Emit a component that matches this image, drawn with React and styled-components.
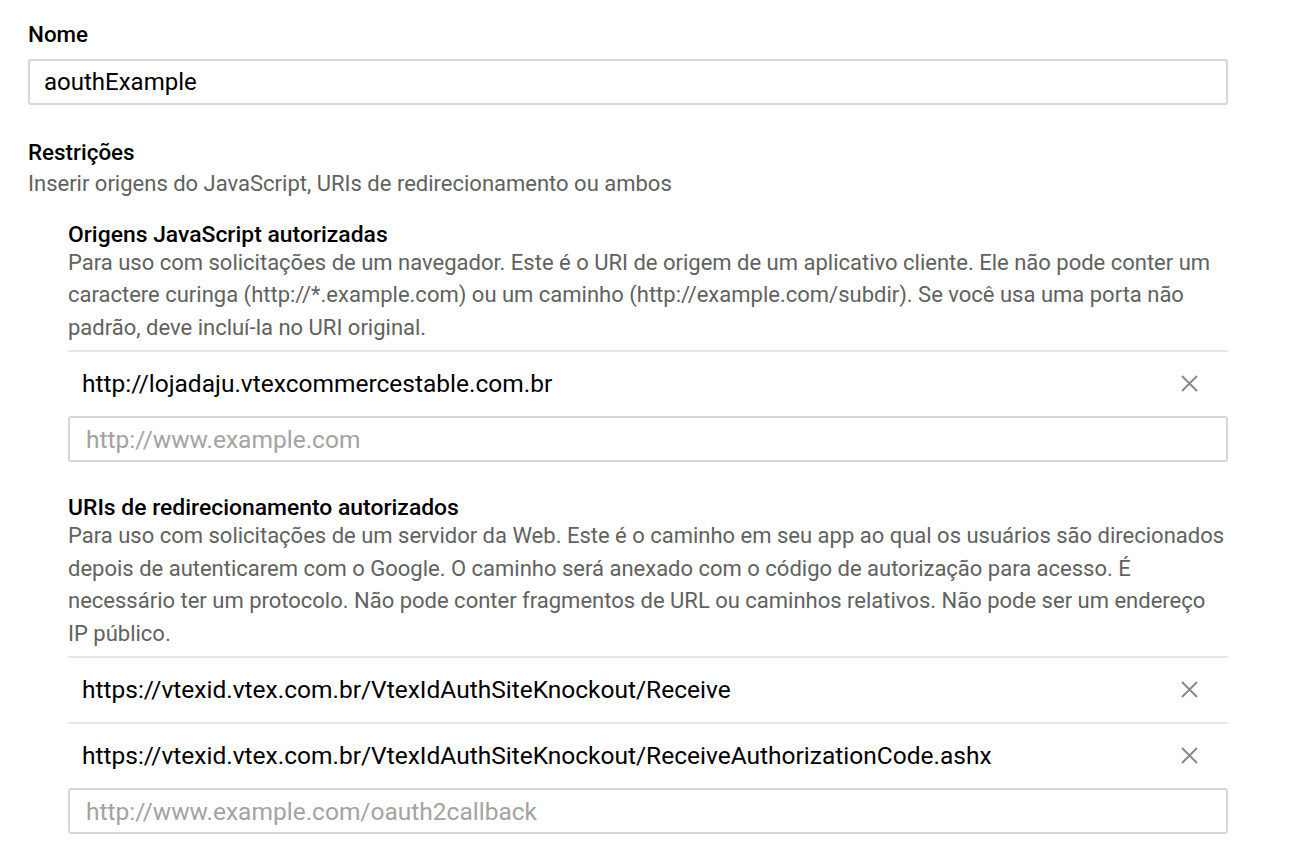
import React from "react";
import styled, { createGlobalStyle } from "styled-components";

const Global = createGlobalStyle`
  html, body { margin: 0; padding: 0; background: #fff; }
  body { font-family: Roboto, "Noto Sans", Arial, sans-serif; color: #000; }
  * { box-sizing: border-box; }
`;

const Page = styled.div`
  padding: 22px 62px 0 28px;
  width: 1290px;
`;

const Label = styled.div`
  font-size: 22.4px;
  font-weight: 500;
  line-height: 24px;
  color: #000;
  white-space: nowrap;
`;

const TextInput = styled.div`
  height: 46px;
  border: 2px solid #d6d6d6;
  border-radius: 3px;
  display: flex;
  align-items: center;
  padding: 0 ${(p) => (p.$placeholder ? 16 : 14)}px;
  font-size: ${(p) => (p.$placeholder ? 24.5 : 24)}px;
  white-space: nowrap;
  color: ${(p) => (p.$placeholder ? "#a3a3a3" : "#000")};
`;

const Section = styled.div`
  margin-top: ${(p) => p.$top}px;
`;

const Help = styled.div`
  font-size: 22px;
  line-height: 32.5px;
  color: #616161;
  white-space: nowrap;
  margin-top: ${(p) => p.$top || 0}px;
`;

const Sub = styled.div`
  padding-left: 40px;
  margin-top: ${(p) => p.$top}px;
`;

const SubLabel = styled.div`
  font-size: 22.9px;
  font-weight: 500;
  line-height: 24px;
  color: #000;
  white-space: nowrap;
`;

const List = styled.div`
  margin-top: 6px;
`;

const Row = styled.div`
  height: 66px;
  display: flex;
  align-items: center;
  justify-content: space-between;
  padding: 0 30px 2px 14px;
  font-size: 24.5px;
  color: #000;
  border-top: 2px solid #e6e6e6;
  white-space: nowrap;
`;

const Close = styled.svg`
  width: 17px;
  height: 17px;
  flex: none;
`;

const X = () => (
  <Close viewBox="0 0 17 17">
    <path d="M1 1 L16 16 M16 1 L1 16" stroke="#8a8a8a" strokeWidth="2" />
  </Close>
);

const InputWrap = styled.div`
  margin-top: ${(p) => p.$top}px;
`;

export default function App() {
  return (
    <Page>
      <Global />
      <Label>Nome</Label>
      <InputWrap $top={13}>
        <TextInput>aouthExample</TextInput>
      </InputWrap>
      <Section $top={35}>
        <Label>Restrições</Label>
        <Help $top={4}>Inserir origens do JavaScript, URIs de redirecionamento ou ambos</Help>
      </Section>
      <Sub $top={22}>
        <SubLabel>Origens JavaScript autorizadas</SubLabel>
        <Help>
          Para uso com solicitações de um navegador. Este é o URI de origem de um aplicativo cliente. Ele não pode conter um
          <br />
          caractere curinga (http://*.example.com) ou um caminho (http://example.com/subdir). Se você usa uma porta não
          <br />
          padrão, deve incluí-la no URI original.
        </Help>
        <List>
          <Row>
            <span>http://lojadaju.vtexcommercestable.com.br</span>
            <X />
          </Row>
        </List>
        <TextInput $placeholder>http://www.example.com</TextInput>
      </Sub>
      <Sub $top={34}>
        <SubLabel>URIs de redirecionamento autorizados</SubLabel>
        <Help>
          Para uso com solicitações de um servidor da Web. Este é o caminho em seu app ao qual os usuários são direcionados
          <br />
          depois de autenticarem com o Google. O caminho será anexado com o código de autorização para acesso. É
          <br />
          necessário ter um protocolo. Não pode conter fragmentos de URL ou caminhos relativos. Não pode ser um endereço
          <br />
          IP público.
        </Help>
        <List>
          <Row>
            <span>https://vtexid.vtex.com.br/VtexIdAuthSiteKnockout/Receive</span>
            <X />
          </Row>
          <Row>
            <span>https://vtexid.vtex.com.br/VtexIdAuthSiteKnockout/ReceiveAuthorizationCode.ashx</span>
            <X />
          </Row>
        </List>
        <TextInput $placeholder>http://www.example.com/oauth2callback</TextInput>
      </Sub>
    </Page>
  );
}
